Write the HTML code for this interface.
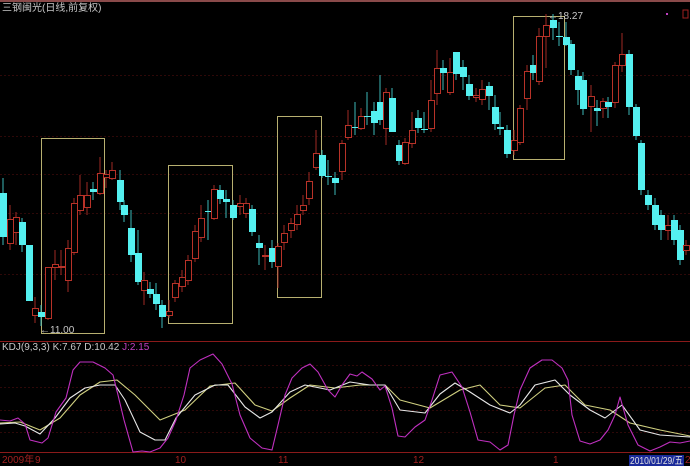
<!DOCTYPE html>
<html><head><meta charset="utf-8">
<style>
html,body{margin:0;padding:0;background:#000;width:690px;height:466px;overflow:hidden}
svg{display:block}
text{font-family:"Liberation Sans","Noto Sans CJK SC",sans-serif;font-size:10px}
</style></head><body>
<svg id="s" width="690" height="466" viewBox="0 0 690 466" xmlns="http://www.w3.org/2000/svg">
<rect width="690" height="466" fill="#000"/>
<rect x="0" y="0" width="690" height="2" fill="#8a4a4a"/>
<g stroke="#2e0808" stroke-width="1" stroke-dasharray="2,2">
<line x1="0" y1="75.5" x2="690" y2="75.5"/>
<line x1="0" y1="136.5" x2="690" y2="136.5"/>
<line x1="0" y1="174.5" x2="690" y2="174.5"/>
<line x1="0" y1="213.5" x2="690" y2="213.5"/>
<line x1="0" y1="274.5" x2="690" y2="274.5"/>
<line x1="0" y1="365.5" x2="690" y2="365.5"/>
<line x1="0" y1="387.5" x2="690" y2="387.5"/>
<line x1="0" y1="410.5" x2="690" y2="410.5"/>
<line x1="0" y1="432.5" x2="690" y2="432.5"/>
</g>
<line x1="0" y1="341.5" x2="690" y2="341.5" stroke="#8a1a1a"/>
<line x1="0" y1="452.5" x2="690" y2="452.5" stroke="#8a1a1a"/>
<text x="2" y="11" fill="#c8c8c8" font-size="9">三钢闽光(日线,前复权)</text>
<rect x="683" y="10" width="5" height="8" fill="none" stroke="#a02020"/>
<rect x="666" y="13" width="2" height="2" fill="#c040c0"/>
<g fill="none" stroke="#b8b070" stroke-width="1">
<rect x="41.5" y="138.5" width="63" height="195"/>
<rect x="168.5" y="165.5" width="64" height="158"/>
<rect x="277.5" y="116.5" width="44" height="181"/>
<rect x="513.5" y="16.5" width="51" height="143"/>
</g>
<text x="40" y="333" fill="#c8c8c8" font-size="9">←11.00</text>
<text x="548" y="19" fill="#c8c8c8" font-size="9">←18.27</text>
<g id="c"></g>
<text x="2" y="350" fill="#c8c8c8" font-size="8.5">KDJ(9,3,3) <tspan>K:7.67</tspan> D:10.42 <tspan fill="#c040c0">J:2.15</tspan></text>
<g fill="none" stroke-width="1.1" stroke-linejoin="round">
<polyline stroke="#d0d080" points="0,423 20,422 40,430 60,418 80,395 100,382 117,380 135,395 160,420 185,410 210,386 235,383 255,405 272,411 290,398 310,385 335,388 360,385 385,385 400,400 430,408 460,390 480,385 500,405 520,408 545,388 565,385 585,405 610,410 630,423 660,430 690,436"/>
<polyline stroke="#e8e8e8" points="0,424 15,423 25,426 40,434 55,418 70,398 85,388 100,385 115,385 125,400 140,432 155,440 165,440 176,418 195,395 215,385 228,385 245,407 260,418 272,412 290,392 305,385 330,390 350,382 370,385 385,385 400,410 425,413 440,394 455,383 470,392 490,405 510,413 520,405 535,385 555,380 570,395 590,410 605,418 622,405 640,430 660,435 690,437"/>
<polyline stroke="#c030c0" points="0,420 10,421 18,418 25,424 30,440 42,443 48,438 56,412 66,398 73,370 80,362 93,362 105,368 113,375 118,395 124,420 133,452 142,451 150,452 160,448 168,438 176,420 184,395 190,368 200,360 213,354 222,364 232,384 240,415 250,438 262,448 272,450 278,425 285,395 292,378 302,368 310,364 318,372 328,390 335,397 342,385 350,374 357,376 362,372 372,379 380,390 385,386 392,408 398,436 405,437 415,427 425,420 432,400 440,375 452,372 462,387 470,412 478,440 490,442 500,450 508,445 514,415 520,390 530,368 542,360 552,360 562,368 568,380 572,415 580,441 590,444 600,440 608,430 615,415 620,397 628,425 638,445 650,451 660,447 670,442 680,443 690,441"/>
</g>
<text x="2" y="463" fill="#a02020" font-size="9">2009年</text>
<text x="35" y="463" fill="#a02020" font-size="9">9</text>
<text x="175" y="463" fill="#a02020" font-size="9">10</text>
<text x="278" y="463" fill="#a02020" font-size="9">11</text>
<text x="413" y="463" fill="#a02020" font-size="9">12</text>
<text x="553" y="463" fill="#a02020" font-size="9">1</text>
<rect x="629" y="455" width="55" height="11" fill="#1a2a9a"/>
<text x="630" y="464" fill="#e0e0e0" font-size="8.5" textLength="53" lengthAdjust="spacingAndGlyphs">2010/01/29/五</text>
<text x="685" y="463" fill="#a02020" font-size="9">2</text>
</svg>
<script>
var d=[
[3,'c',193,237,178,245],[10,'r',219,243,205,250],[16,'r',217,232,212,245],[22,'c',222,245,218,252],[29,'c',245,301,245,301],[35,'r',308,315,297,323],[41,'c',312,317,305,326],
[48,'r',267,318,267,320],[55,'r',264,267,250,280],[61,'r',266,267,250,275],[68,'r',248,280,240,292],[74,'r',203,252,198,255],[80,'r',195,210,175,215],[87,'r',195,207,182,215],
[93,'c',189,192,182,200],[100,'r',173,193,157,195],[106,'r',174,177,170,188],[112,'r',170,178,162,180],[120,'c',180,202,170,210],[124,'c',205,215,200,222],[131,'c',228,255,210,262],
[138,'c',253,282,230,285],[144,'r',280,290,272,305],[150,'c',289,294,282,298],[156,'c',294,304,283,310],[162,'c',305,317,300,328],[169,'r',311,315,300,318],[175,'r',283,297,280,302],
[182,'r',277,286,270,292],[188,'r',260,280,255,285],[195,'r',231,258,225,262],[201,'r',218,237,205,242],[208,'c',211,212,200,240],[214,'r',189,218,185,220],[220,'c',190,199,185,204],
[226,'c',199,202,190,218],[233,'c',205,218,200,220],[240,'r',203,206,195,215],[246,'r',203,213,198,218],[252,'c',209,232,205,236],[259,'c',243,248,235,265],[265,'r',255,256,245,270],
[272,'c',248,262,240,268],[278,'r',246,266,243,288],[284,'r',233,242,225,250],[291,'r',223,230,218,238],[297,'r',214,224,205,230],[303,'r',205,210,195,215],[309,'r',181,198,172,205],
[316,'r',153,167,130,170],[322,'c',155,176,150,178],[328,'c',176,177,160,185],[335,'c',178,183,172,195],[342,'r',143,171,140,180],[348,'r',125,137,110,140],[355,'c',127,128,102,135],
[361,'r',116,128,108,130],[367,'c',116,117,92,125],[374,'c',111,123,102,135],[380,'c',102,120,75,125],[386,'r',92,128,88,145],[392,'c',98,132,88,132],[399,'c',145,161,140,165],
[405,'r',142,163,138,165],[412,'r',130,143,112,148],[418,'c',118,128,110,133],[424,'c',129,130,112,133],[431,'r',100,128,80,132],[437,'r',68,93,50,105],[443,'c',68,73,60,90],
[450,'r',72,92,58,95],[456,'c',52,74,52,80],[463,'c',67,77,60,90],[469,'c',84,96,75,100],[476,'r',95,97,88,102],[482,'r',89,99,80,105],[489,'c',86,96,82,110],[495,'c',107,124,95,130],
[500,'c',127,129,112,135],[507,'c',130,154,125,158],[514,'r',140,150,130,155],[520,'r',108,142,105,145],[527,'r',71,98,65,110],[533,'c',65,73,55,80],[539,'r',36,81,28,85],
[546,'r',25,36,14,68],[553,'c',20,28,14,40],[559,'c',36,37,22,46],[566,'c',37,45,22,46],[571,'c',44,70,40,75],[578,'c',76,90,70,105],[583,'c',80,109,72,115],[591,'r',96,106,85,132],
[597,'c',108,111,100,126],[603,'r',101,108,98,118],[608,'c',102,107,97,118],[615,'r',65,102,62,108],[622,'r',54,65,33,72],[629,'c',54,107,50,115],[636,'c',107,136,104,140],
[641,'c',143,190,140,195],[648,'c',195,205,190,210],[655,'c',205,225,198,230],[661,'c',215,230,210,240],[668,'r',225,230,215,240],[674,'c',220,240,215,245],[680,'c',230,260,225,265],[686,'r',245,250,240,255]
];
var g=document.getElementById('c'),h='';
d.forEach(function(a){var x=a[0],col=a[1]=='c'?'#54f0f0':'#b83228';
h+='<line x1="'+x+'" y1="'+a[4]+'" x2="'+x+'" y2="'+a[5]+'" stroke="'+(a[1]=='c'?'#3cb8b8':'#a02a24')+'"/>';
var hh=Math.max(a[3]-a[2],1);
if(a[1]=='c')h+='<rect x="'+(x-3)+'" y="'+a[2]+'" width="7" height="'+hh+'" fill="'+col+'"/>';
else h+='<rect x="'+(x-2.5)+'" y="'+(a[2]+.5)+'" width="6" height="'+hh+'" fill="#000" stroke="'+col+'"/>';});
g.innerHTML=h;
</script>
</body></html>
